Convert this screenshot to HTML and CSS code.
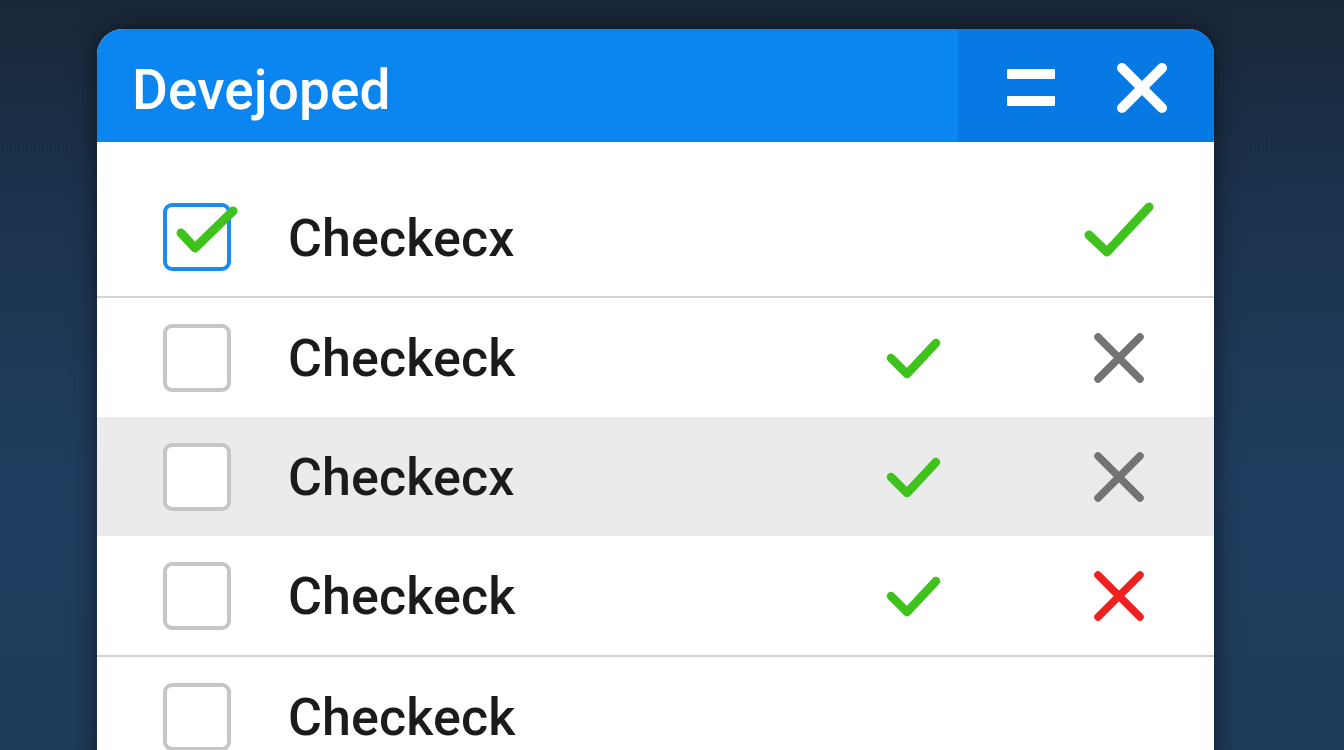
FILE: index.html
```html
<!DOCTYPE html>
<html lang="en">
<head>
<meta charset="utf-8">
<title>Devejoped</title>
<link rel="stylesheet" href="styles.css">
</head>
<body>
<div class="stage">
  <div class="window">
    <div class="titlebar">
      <div class="title">Devejoped</div>
      <div class="controls">
        <svg class="ctl-eq" width="48" height="37" viewBox="0 0 48 37"><rect x="0" y="0" width="48" height="10" rx="1" fill="#fff"/><rect x="0" y="27" width="48" height="10" rx="1" fill="#fff"/></svg>
        <svg class="ctl-x" width="52" height="52" viewBox="0 0 52 52"><path d="M6 6 L46 46 M46 6 L6 46" stroke="#fff" stroke-width="10" stroke-linecap="round"/></svg>
      </div>
    </div>
    <div class="list">
      <div class="row row-first sep">
        <div class="box box-checked">
          <svg class="box-tick" width="76" height="52" viewBox="0 0 76 52"><path d="M18 30 L32 45 L70 8" fill="none" stroke="#3fc21c" stroke-width="9" stroke-linecap="round" stroke-linejoin="round"/></svg>
        </div>
        <div class="label">Checkecx</div>
        <div class="col col-a"></div>
        <div class="col col-b">
          <svg class="big-tick" width="78" height="62" viewBox="0 0 78 62"><path d="M9 37 L27 54 L69 9" fill="none" stroke="#3fc21c" stroke-width="9" stroke-linecap="round" stroke-linejoin="round"/></svg>
        </div>
      </div>
      <div class="row">
        <div class="box"></div>
        <div class="label">Checkeck</div>
        <div class="col col-a">
          <svg width="61" height="48" viewBox="0 0 61 48"><path d="M8 24 L24 40 L53 9" fill="none" stroke="#3fc21c" stroke-width="8.5" stroke-linecap="round" stroke-linejoin="round"/></svg>
        </div>
        <div class="col col-b">
          <svg width="58" height="56" viewBox="0 0 58 56"><path d="M8 7 L50 49 M50 7 L8 49" stroke="#737373" stroke-width="7.5" stroke-linecap="round"/></svg>
        </div>
      </div>
      <div class="row row-shade">
        <div class="box"></div>
        <div class="label">Checkecx</div>
        <div class="col col-a">
          <svg width="61" height="48" viewBox="0 0 61 48"><path d="M8 24 L24 40 L53 9" fill="none" stroke="#3fc21c" stroke-width="8.5" stroke-linecap="round" stroke-linejoin="round"/></svg>
        </div>
        <div class="col col-b">
          <svg width="58" height="56" viewBox="0 0 58 56"><path d="M8 7 L50 49 M50 7 L8 49" stroke="#737373" stroke-width="7.5" stroke-linecap="round"/></svg>
        </div>
      </div>
      <div class="row sep">
        <div class="box"></div>
        <div class="label">Checkeck</div>
        <div class="col col-a">
          <svg width="61" height="48" viewBox="0 0 61 48"><path d="M8 24 L24 40 L53 9" fill="none" stroke="#3fc21c" stroke-width="8.5" stroke-linecap="round" stroke-linejoin="round"/></svg>
        </div>
        <div class="col col-b">
          <svg width="58" height="56" viewBox="0 0 58 56"><path d="M8 7 L50 49 M50 7 L8 49" stroke="#ee2020" stroke-width="7.5" stroke-linecap="round"/></svg>
        </div>
      </div>
      <div class="row">
        <div class="box"></div>
        <div class="label">Checkeck</div>
        <div class="col col-a"></div>
        <div class="col col-b"></div>
      </div>
    </div>
  </div>
</div>
</body>
</html>
```

FILE: styles.css
```css
html, body {
  margin: 0;
  padding: 0;
  height: 750px;
  overflow: hidden;
}
body {
  font-family: Roboto, "Liberation Sans", sans-serif;
  background-color: #1d3653;
  background-image:
    repeating-linear-gradient(90deg, rgba(255,255,255,0.015) 0 1px, transparent 1px 4px),
    repeating-linear-gradient(0deg, rgba(0,0,0,0.035) 0 1px, transparent 1px 4px),
    linear-gradient(180deg, #182738 0%, #1c3350 30%, #1f3d5f 65%, #1e3b5a 100%);
}
.stage {
  padding: 29px 0 0 97px;
}
.window {
  width: 1117px;
  height: 760px;
  background: #ffffff;
  border-radius: 26px 26px 0 0;
  box-shadow: 0 0 24px rgba(0,0,0,0.55);
  overflow: hidden;
}
.titlebar {
  display: flex;
  height: 113px;
  background: #0b86f1;
}
.title {
  flex: 1;
  display: flex;
  align-items: center;
  padding: 8px 0 0 35px;
  color: #ffffff;
  font-size: 55px;
  font-weight: 500;
  letter-spacing: 0.1px;
}
.controls {
  width: 256px;
  display: flex;
  align-items: center;
  background: #0679e4;
  padding-top: 4px;
  box-sizing: border-box;
}
.ctl-eq {
  margin-left: 49px;
}
.ctl-x {
  margin-left: 61px;
}
.list {
  display: flex;
  flex-direction: column;
}
.row {
  display: flex;
  align-items: center;
  height: 119px;
  padding: 0 45px 0 66px;
  background: #ffffff;
}
.row-first {
  height: 154px;
  padding-top: 36px;
  box-sizing: border-box;
}
.row.sep {
  border-bottom: 2px solid #d3d3d3;
}
.row-first.sep {
  height: 156px;
}
.row-shade {
  background: #ebebeb;
}
.box {
  position: relative;
  width: 68px;
  height: 68px;
  box-sizing: border-box;
  border: 4px solid #c6c6c6;
  border-radius: 9px;
  flex-shrink: 0;
  background: #ffffff;
}
.box-checked {
  border-color: #1a8cf0;
}
.box-tick {
  position: absolute;
  left: -4px;
  top: -4px;
  overflow: visible;
}
.label {
  flex: 1;
  margin-left: 57px;
  font-size: 52px;
  font-weight: 500;
  letter-spacing: 0.1px;
  color: #1b1b1b;
  padding-top: 2px;
}
.col {
  width: 100px;
  display: flex;
  justify-content: center;
  align-items: center;
}
.col-a {
  margin-right: 106px;
}
.big-tick {
  margin-bottom: 16px;
}
```
